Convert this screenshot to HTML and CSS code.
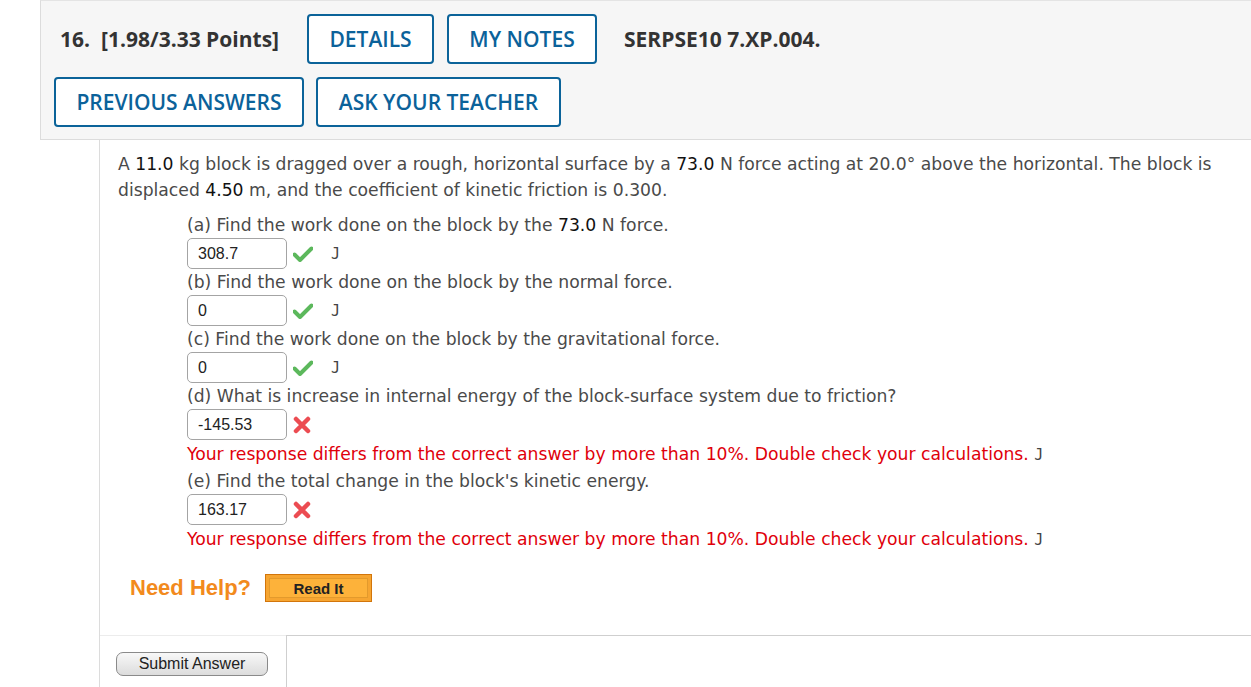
FILE: index.html
```html
<!DOCTYPE html>
<html>
<head>
<meta charset="utf-8">
<link rel="stylesheet" href="styles.css">
</head>
<body>
<div class="page">
  <div class="qhead">
    <div class="row row1">
      <span class="qnum">16.</span>
      <span class="pts">[1.98/3.33 Points]</span>
      <span class="btn btn-details">DETAILS</span>
      <span class="btn btn-notes">MY NOTES</span>
      <span class="code">SERPSE10 7.XP.004.</span>
    </div>
    <div class="row row2">
      <span class="btn btn-prev">PREVIOUS ANSWERS</span>
      <span class="btn btn-ask">ASK YOUR TEACHER</span>
    </div>
  </div>
  <div class="qbody">
    <p class="stem">A <span class="num">11.0</span> kg block is dragged over a rough, horizontal surface by a <span class="num">73.0</span> N force acting at 20.0&deg; above the horizontal. The block is displaced <span class="num">4.50</span> m, and the coefficient of kinetic friction is 0.300.</p>
    <div class="parts">
      <div class="part">
        <div class="q">(a) Find the work done on the block by the <span class="num">73.0</span> N force.</div>
        <div class="ans"><span class="inp">308.7</span><svg class="ok" viewBox="0 0 20 16" width="20" height="16"><path d="M1.5 8.5 L7 14 L18.5 2.5" fill="none" stroke="#5cb85c" stroke-width="4" stroke-linejoin="round" stroke-linecap="round"/></svg><span class="unit">J</span></div>
      </div>
      <div class="part">
        <div class="q">(b) Find the work done on the block by the normal force.</div>
        <div class="ans"><span class="inp">0</span><svg class="ok" viewBox="0 0 20 16" width="20" height="16"><path d="M1.5 8.5 L7 14 L18.5 2.5" fill="none" stroke="#5cb85c" stroke-width="4" stroke-linejoin="round" stroke-linecap="round"/></svg><span class="unit">J</span></div>
      </div>
      <div class="part">
        <div class="q">(c) Find the work done on the block by the gravitational force.</div>
        <div class="ans"><span class="inp">0</span><svg class="ok" viewBox="0 0 20 16" width="20" height="16"><path d="M1.5 8.5 L7 14 L18.5 2.5" fill="none" stroke="#5cb85c" stroke-width="4" stroke-linejoin="round" stroke-linecap="round"/></svg><span class="unit">J</span></div>
      </div>
      <div class="part">
        <div class="q">(d) What is increase in internal energy of the block-surface system due to friction?</div>
        <div class="ans"><span class="inp">-145.53</span><svg class="bad" viewBox="0 0 18 18" width="18" height="18"><path d="M3 3 L15 15 M15 3 L3 15" fill="none" stroke="#ec4c52" stroke-width="4.5" stroke-linecap="round"/></svg></div>
        <div class="err">Your response differs from the correct answer by more than 10%. Double check your calculations. <span class="unit2">J</span></div>
      </div>
      <div class="part">
        <div class="q">(e) Find the total change in the block's kinetic energy.</div>
        <div class="ans"><span class="inp">163.17</span><svg class="bad" viewBox="0 0 18 18" width="18" height="18"><path d="M3 3 L15 15 M15 3 L3 15" fill="none" stroke="#ec4c52" stroke-width="4.5" stroke-linecap="round"/></svg></div>
        <div class="err">Your response differs from the correct answer by more than 10%. Double check your calculations. <span class="unit2">J</span></div>
      </div>
    </div>
    <div class="help">
      <span class="need">Need Help?</span>
      <span class="readit"><span class="readit-in">Read It</span></span>
    </div>
    <div class="submitrow">
      <div class="subcell"><span class="submit">Submit Answer</span></div>
      <div class="restcell"></div>
    </div>
  </div>
</div>
</body>
</html>
```

FILE: styles.css
```css
html, body {
  margin: 0;
  padding: 0;
  background: #fff;
  overflow: hidden;
}
.page {
  width: 1251px;
  height: 687px;
  overflow: hidden;
}
.qhead {
  margin-left: 40px;
  width: 1240px;
  box-sizing: border-box;
  background: #f6f6f6;
  border: 1px solid #dcdcdc;
  border-top-color: #e4e4e4;
  padding: 13px 0 12px 0;
  font-family: "Open Sans", sans-serif;
}
.row {
  display: flex;
  align-items: center;
  height: 50px;
}
.row1 {
  padding-left: 19px;
}
.row2 {
  margin-top: 13px;
  padding-left: 13px;
}
.qnum, .pts, .code {
  font-weight: 700;
  font-size: 21px;
  color: #333;
}
.pts {
  margin-left: 11px;
}
.btn {
  display: flex;
  align-items: center;
  justify-content: center;
  box-sizing: border-box;
  height: 50px;
  border: 2px solid #0b6399;
  border-radius: 4px;
  background: #fff;
  color: #0b629a;
  font-size: 21px;
  font-weight: 600;
}
.btn-details { width: 127px; margin-left: 28px; }
.btn-notes { width: 150px; margin-left: 13px; }
.code { margin-left: 27px; }
.btn-prev { width: 250px; }
.btn-ask { width: 245px; margin-left: 12px; }

.qbody {
  margin-left: 99px;
  border-left: 1px solid #dcdcdc;
  padding-top: 11px;
  font-family: "DejaVu Sans", Verdana, sans-serif;
  font-size: 17.2px;
  color: #4a4a4a;
  height: 560px;
}
.stem {
  margin: 0 20px 0 18px;
  line-height: 26px;
}
.num {
  color: #111;
}
.parts {
  margin-left: 87px;
  margin-top: 9px;
}
.q {
  line-height: 26px;
}
.ans {
  display: flex;
  align-items: center;
  height: 31px;
}
.inp {
  box-sizing: border-box;
  width: 100px;
  height: 31px;
  border: 1px solid #a4a4a4;
  border-radius: 5px;
  padding-left: 10px;
  display: flex;
  align-items: center;
  font-family: "Liberation Sans", Arial, sans-serif;
  font-size: 16px;
  color: #222;
}
.ok {
  margin-left: 6px;
}
.bad {
  margin-left: 6px;
}
.unit {
  margin-left: 18px;
  font-family: "DejaVu Sans Mono", monospace;
  font-size: 15px;
  color: #444;
}
.unit2 {
  font-family: "DejaVu Sans Mono", monospace;
  font-size: 15px;
  color: #444;
}
.err {
  color: #e0000b;
  line-height: 26px;
  margin-top: 1px;
}
.help {
  display: flex;
  align-items: center;
  margin-left: 30px;
  margin-top: 21px;
}
.need {
  font-family: "Liberation Sans", Arial, sans-serif;
  font-weight: 700;
  font-size: 22px;
  color: #f28a1d;
}
.readit {
  margin-left: 14px;
  box-sizing: border-box;
  width: 107px;
  height: 28px;
  background: #f6a531;
  border: 1px solid #d2750b;
  padding: 3px;
  display: flex;
}
.readit-in {
  flex: 1;
  border: 1px solid #e39a2c;
  background: #fdb23a;
  display: flex;
  align-items: center;
  justify-content: center;
  font-family: "Liberation Sans", Arial, sans-serif;
  font-weight: 700;
  font-size: 15px;
  color: #222;
}
.submitrow {
  display: flex;
  margin-top: 33px;
  height: 60px;
}
.subcell {
  width: 186px;
  border-top: 1px solid #ececec;
  padding-top: 16px;
  padding-left: 16px;
  box-sizing: border-box;
}
.restcell {
  flex: 1;
  border-top: 1px solid #cfcfcf;
  border-left: 1px solid #cfcfcf;
}
.submit {
  display: flex;
  align-items: center;
  justify-content: center;
  box-sizing: border-box;
  width: 152px;
  height: 24px;
  border: 1px solid #8a8a8a;
  border-radius: 7px;
  background: linear-gradient(#f8f8f8, #dcdcdc);
  font-family: "Liberation Sans", Arial, sans-serif;
  font-size: 16px;
  color: #222;
}
```
